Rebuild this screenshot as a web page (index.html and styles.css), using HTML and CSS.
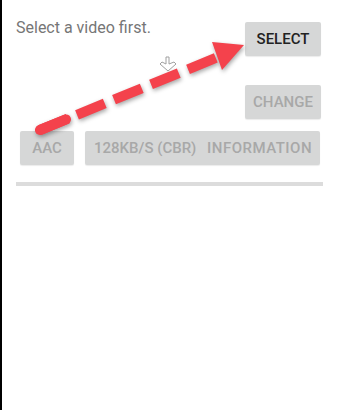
FILE: index.html
```html
<!doctype html>
<html>
<head>
<meta charset="utf-8">
<title>Audio Extract</title>
<link rel="stylesheet" href="styles.css">
</head>
<body>

<div class="screen">

    <div class="row row-top">
        <p class="hint">Select a video first.</p>
        <button class="btn btn-select">SELECT</button>
    </div>

    <div class="row row-right">
        <button class="btn btn-change" disabled>CHANGE</button>
    </div>

    <div class="row row-format">
        <button class="btn btn-codec" disabled>AAC</button>
        <button class="btn btn-info" disabled><span class="rate">128KB/S (CBR)</span><span class="label">INFORMATION</span></button>
    </div>

    <div class="divider"></div>

</div>

<!-- hint overlay -->
<svg class="overlay" width="337" height="410" viewBox="0 0 337 410">
    <path class="cursor" d="M166 57 L169 57 L169 64 L174 62 L176 64 L168 71 L160 64 L162 62 L166 64 Z"/>
    <g class="arrow">
        <path class="dash-start" d="M40 130 L66 119.4"/>
        <path d="M40 130 L218 57" stroke-dasharray="30 10"/>
        <polygon points="212,42 244,45 222,70"/>
    </g>
</svg>

</body>
</html>
```

FILE: styles.css
```css
html, body { margin: 0; padding: 0; }
body { width: 337px; height: 410px; box-sizing: border-box; border-left: 2px solid #000; background-color: #fff; font-family: Roboto, "Noto Sans", Arial, sans-serif; overflow: hidden; position: relative; }

.screen { padding: 18px 16px 0 14px; }

.row { display: flex; }
.row-top { justify-content: space-between; align-items: flex-start; }
.row-right { justify-content: flex-end; margin-top: 29px; }
.row-format { margin-top: 12px; padding-left: 4px; gap: 11px; }

.hint { margin: 0; font-size: 16px; line-height: 20px; color: #767676; }

.btn { height: 34px; padding: 0; border: none; border-radius: 2px; background-color: #d6d7d7; box-shadow: 0 1px 1px rgba(0,0,0,0.08); font-family: Roboto, "Noto Sans", Arial, sans-serif; font-size: 15px; font-weight: 500; color: #a8a8a8; display: flex; align-items: center; justify-content: center; white-space: nowrap; }
.btn-select { width: 76px; margin-top: 4px; color: #222; }
.btn-change { width: 76px; }
.btn-codec { width: 54px; }
.btn-info { width: 235px; justify-content: flex-start; padding-left: 9px; }
.btn-info .rate { width: 113px; overflow: hidden; text-align: left; }
.btn-info .label { letter-spacing: 0.5px; }

.divider { height: 4px; margin: 17px 0 0 0; width: 307px; background-color: #dcdcdc; }

.overlay { position: absolute; left: -2px; top: 0; pointer-events: none; }
.cursor { fill: #fff; stroke: #a0a0a0; stroke-width: 1; }
.arrow { filter: drop-shadow(1px 2px 2px rgba(0,0,0,0.35)); }
.arrow path { fill: none; stroke: #f4424c; stroke-width: 10; }
.arrow .dash-start { stroke-linecap: round; }
.arrow polygon { fill: #f4424c; }
```
